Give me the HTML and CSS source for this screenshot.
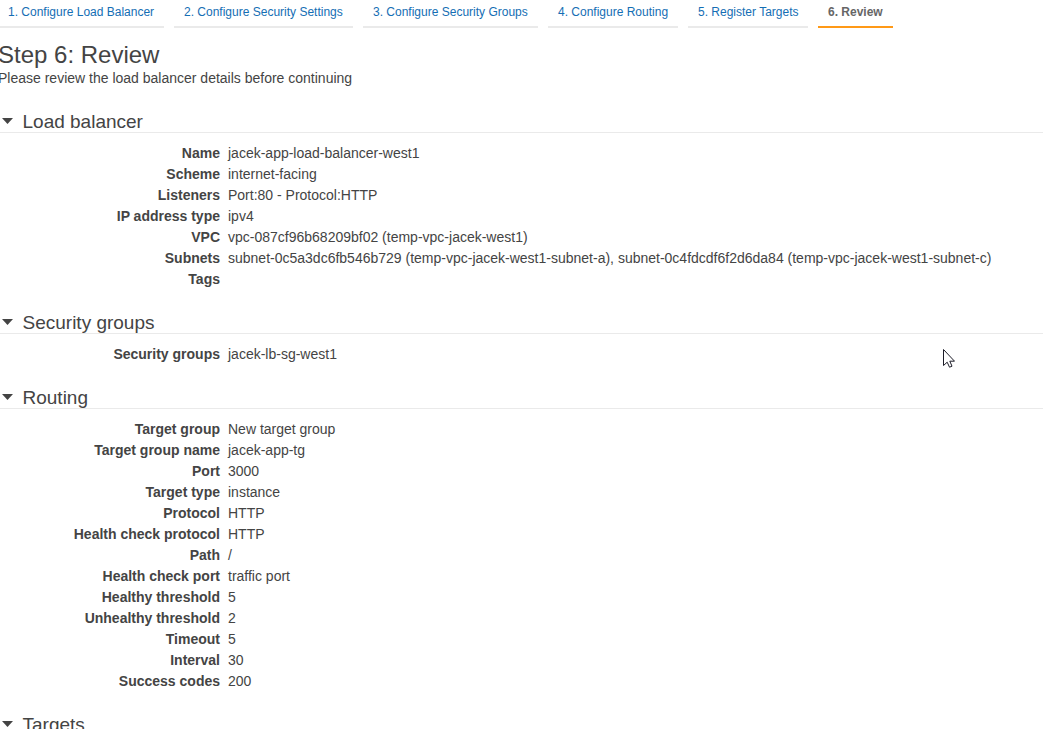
FILE: index.html
```html
<!DOCTYPE html>
<html lang="en">
<head>
<meta charset="utf-8">
<title>Step 6: Review</title>
<link rel="stylesheet" href="styles.css">
</head>
<body>
<nav class="steps">
<a class="step step-lb">1. Configure Load Balancer</a>
<a class="step step-settings">2. Configure Security Settings</a>
<a class="step step-groups">3. Configure Security Groups</a>
<a class="step step-routing">4. Configure Routing</a>
<a class="step step-targets">5. Register Targets</a>
<a class="step step-review active">6. Review</a>
</nav>
<main>
<h1 class="title">Step 6: Review</h1>
<p class="intro">Please review the load balancer details before continuing</p>
<section class="section">
<h2 class="heading"><svg class="arrow" viewBox="0 0 11 6"><path d="M0 0H11L5.5 6Z"/></svg><span>Load balancer</span></h2>
<dl class="details">
<dt>Name</dt><dd>jacek-app-load-balancer-west1</dd>
<dt>Scheme</dt><dd>internet-facing</dd>
<dt>Listeners</dt><dd>Port:80 - Protocol:HTTP</dd>
<dt>IP address type</dt><dd>ipv4</dd>
<dt>VPC</dt><dd>vpc-087cf96b68209bf02 (temp-vpc-jacek-west1)</dd>
<dt>Subnets</dt><dd>subnet-0c5a3dc6fb546b729 (temp-vpc-jacek-west1-subnet-a), subnet-0c4fdcdf6f2d6da84 (temp-vpc-jacek-west1-subnet-c)</dd>
<dt>Tags</dt><dd></dd>
</dl>
</section>
<section class="section">
<h2 class="heading"><svg class="arrow" viewBox="0 0 11 6"><path d="M0 0H11L5.5 6Z"/></svg><span>Security groups</span></h2>
<dl class="details">
<dt>Security groups</dt><dd>jacek-lb-sg-west1</dd>
</dl>
</section>
<section class="section">
<h2 class="heading"><svg class="arrow" viewBox="0 0 11 6"><path d="M0 0H11L5.5 6Z"/></svg><span>Routing</span></h2>
<dl class="details">
<dt>Target group</dt><dd>New target group</dd>
<dt>Target group name</dt><dd>jacek-app-tg</dd>
<dt>Port</dt><dd>3000</dd>
<dt>Target type</dt><dd>instance</dd>
<dt>Protocol</dt><dd>HTTP</dd>
<dt>Health check protocol</dt><dd>HTTP</dd>
<dt>Path</dt><dd>/</dd>
<dt>Health check port</dt><dd>traffic port</dd>
<dt>Healthy threshold</dt><dd>5</dd>
<dt>Unhealthy threshold</dt><dd>2</dd>
<dt>Timeout</dt><dd>5</dd>
<dt>Interval</dt><dd>30</dd>
<dt>Success codes</dt><dd>200</dd>
</dl>
</section>
<section class="section">
<h2 class="heading"><svg class="arrow" viewBox="0 0 11 6"><path d="M0 0H11L5.5 6Z"/></svg><span>Targets</span></h2>
</section>
</main>
<svg class="cursor" viewBox="0 0 12 19"><path d="M.5 .5V16.5L4.2 13.2L6.5 18.2L9 17.2L6.8 12.2H11.5Z"/></svg>
</body>
</html>
```

FILE: styles.css
```css
body {
  margin: 0;
  height: 729px;
  overflow: hidden;
  background: #fff;
  color: #444;
  font: 14px/21px "Liberation Sans", Arial, sans-serif;
}

.steps {
  display: flex;
  gap: 10px;
  height: 28px;
  margin-left: -2px;
}

.step {
  box-sizing: border-box;
  flex: none;
  padding: 3px 0 0 10px;
  border-bottom: 2px solid #eaeaea;
  color: #146eb4;
  font-size: 12px;
  line-height: 18px;
  white-space: nowrap;
}

.step-lb { width: 166px; }
.step-settings { width: 179px; }
.step-groups { width: 175px; }
.step-routing { width: 130px; }
.step-targets { width: 120px; }
.step-review { width: 75px; }

.step.active {
  border-color: #ff9917;
  color: #666;
  font-weight: bold;
}

.title {
  margin: 13px 0 0 -2px;
  font-size: 24px;
  font-weight: normal;
  line-height: 28px;
}

.intro {
  height: 21px;
  margin: -1px 0 0 -2px;
}

.section {
  margin-bottom: 19px;
}

.heading {
  display: flex;
  align-items: flex-end;
  box-sizing: border-box;
  height: 25px;
  margin: 0;
  gap: 9.5px;
  padding-left: 2px;
  border-bottom: 1px solid #eaeaea;
  font-size: 19px;
  font-weight: normal;
  line-height: 20px;
}

.intro + .section {
  margin-top: 19px;
}

.arrow {
  width: 11px;
  height: 6px;
  margin-bottom: 8px;
  fill: #444;
}

.details {
  display: grid;
  grid-template-columns: 220px 1fr;
  column-gap: 8px;
  grid-auto-rows: 21px;
  margin: 0;
  padding-top: 10px;
}

.details dt {
  font-weight: bold;
  text-align: right;
}

.details dd {
  margin: 0;
  white-space: nowrap;
}

.cursor {
  position: absolute;
  left: 943px;
  top: 349px;
  width: 12px;
  height: 19px;
  fill: #fff;
  stroke: #1c1c28;
}
```
